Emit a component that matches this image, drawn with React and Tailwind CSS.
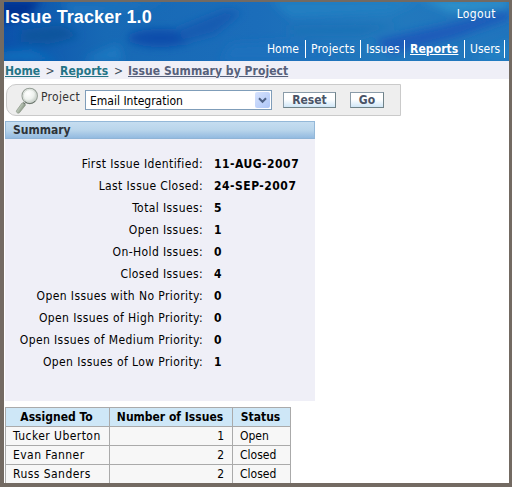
const summary = [
  ["First Issue Identified:", "11-AUG-2007"],
  ["Last Issue Closed:", "24-SEP-2007"],
  ["Total Issues:", "5"],
  ["Open Issues:", "1"],
  ["On-Hold Issues:", "0"],
  ["Closed Issues:", "4"],
  ["Open Issues with No Priority:", "0"],
  ["Open Issues of High Priority:", "0"],
  ["Open Issues of Medium Priority:", "0"],
  ["Open Issues of Low Priority:", "1"],
];

const rows = [
  ["Tucker Uberton", 1, "Open"],
  ["Evan Fanner", 2, "Closed"],
  ["Russ Sanders", 2, "Closed"],
];

function Water() {
  return (
    <svg className="absolute inset-0" width="505" height="59" viewBox="4 2 505 59" preserveAspectRatio="none" aria-hidden="true">
      <defs>
        <linearGradient id="sea" x1="0" x2="1" y1="0" y2="0">
          <stop offset="0" stopColor="#0b52ab" />
          <stop offset="0.2" stopColor="#1769b5" />
          <stop offset="0.5" stopColor="#1b6dba" />
          <stop offset="0.75" stopColor="#2279bd" />
          <stop offset="1" stopColor="#2074bd" />
        </linearGradient>
        <filter id="soft" x="-30%" y="-60%" width="160%" height="220%">
          <feGaussianBlur stdDeviation="4" />
        </filter>
      </defs>
      <rect x="4" y="2" width="505" height="59" fill="url(#sea)" />
      <g filter="url(#soft)">
        <path d="M0 0H42L28 16L0 24Z" fill="#043391" />
        <path d="M22 30L60 25L80 36L50 44L20 42Z" fill="#0b559d" />
        <path d="M0 61V52L30 50L60 61Z" fill="#1070bd" />
        <path d="M90 56L118 44L124 61H84Z" fill="#1d78c1" />
        <path d="M60 2H170L120 12L75 18Z" fill="#1a72bd" />
        <ellipse cx="160" cy="38" rx="32" ry="9" fill="#0e4dab" />
        <path d="M175 30L225 10L242 12L215 34L185 42Z" fill="#155bb1" />
        <path d="M232 44L300 40L340 61H220Z" fill="#1e71bd" />
        <path d="M290 26L400 24L360 36L290 36Z" fill="#1f72b7" />
        <path d="M375 40L440 26L509 9V19L455 38L390 54Z" fill="#1b5bba" />
        <path d="M420 0H509V8L450 12Z" fill="#2f92cb" />
        <path d="M270 0H420L390 14L290 18Z" fill="#237fc2" />
        <path d="M470 61L509 40V61Z" fill="#2381c5" />
      </g>
    </svg>
  );
}

function Magnifier() {
  return (
    <svg className="mt-[2px] ml-2 shrink-0" width="25" height="28" viewBox="0 0 25 28" aria-hidden="true">
      <defs>
        <radialGradient id="glass" cx="0.4" cy="0.35" r="0.68">
          <stop offset="0" stopColor="#ffffff" />
          <stop offset="0.55" stopColor="#eef2ee" />
          <stop offset="1" stopColor="#b9c2bb" />
        </radialGradient>
        <linearGradient id="handle" x1="0" x2="1" y1="0" y2="0.7">
          <stop offset="0" stopColor="#cfd8cc" />
          <stop offset="0.5" stopColor="#b2beaf" />
          <stop offset="1" stopColor="#66735f" />
        </linearGradient>
      </defs>
      <path d="M7.2 15.8L10.4 18.2L4.6 25.6C3.3 27 0.6 25.4 1.6 23.5Z" fill="url(#handle)" stroke="#8a9585" strokeWidth="0.7" />
      <path d="M8.2 15.5L10.6 17.4" stroke="#6c776a" strokeWidth="1.2" />
      <circle cx="14.7" cy="8.9" r="7.7" fill="url(#glass)" stroke="#969f97" strokeWidth="1.1" />
      <path d="M20 14.3A7.5 7.5 0 0 1 10 14.8" fill="none" stroke="#68736a" strokeWidth="1" />
      <circle cx="14.7" cy="8.9" r="6.4" fill="none" stroke="#d2d8d2" strokeWidth="0.8" />
    </svg>
  );
}

const button =
  "h-4 border border-[#8a9ba8] border-r-[#6f8288] border-b-[#6f8288] bg-linear-to-b from-white from-45% to-[#cfe6f7] text-center font-bold leading-[15px] text-[#4a5468]";

export default function App() {
  return (
    <div className="h-[487px] w-[512px] overflow-hidden border-t-2 border-r-3 border-b-4 border-l-4 border-[#736a62] bg-white font-['DejaVu_Sans_Condensed','DejaVu_Sans',sans-serif] text-[12px] leading-[14px] text-black [font-stretch:condensed]">
      <header className="relative h-[59px] overflow-hidden text-white">
        <Water />
        <div className="relative flex h-full flex-col justify-between">
          <div className="flex justify-between">
            <h1 className="pt-[5px] pl-px font-['Liberation_Sans',sans-serif] text-[18px] leading-[20px] font-bold tracking-[0.1px]">Issue Tracker 1.0</h1>
            <a className="mt-[5px] mr-[13px] tracking-[0.4px]">Logout</a>
          </div>
          <nav className="mb-[3px] mr-1 flex h-[18px] justify-end leading-[19px] whitespace-nowrap">
            <a className="w-[39px] border-r border-white">Home</a>
            <a className="w-[55px] border-r border-white pl-[5px] tracking-[0.2px]">Projects</a>
            <a className="w-11 border-r border-white pl-[5px]">Issues</a>
            <a className="w-[60px] border-r border-white pl-[5px] font-bold tracking-[0.1px] underline">Reports</a>
            <a className="w-10 border-r border-white pl-[5px]">Users</a>
          </nav>
        </div>
      </header>
      <div className="flex h-[18px] items-center bg-[#efeff7] pt-px pl-px text-[#3f4f5c]">
        <a className="w-[35px] font-bold text-[#247486] underline">Home</a>
        <span className="w-5 text-center">&gt;</span>
        <a className="w-[49px] font-bold tracking-[0.1px] text-[#247486] underline">Reports</a>
        <span className="w-[19px] text-center">&gt;</span>
        <a className="font-bold tracking-[0.06px] text-[#56607a] underline">Issue Summary by Project</a>
      </div>
      <div className="mt-[5px] ml-[2px] flex h-8 w-[395px] rounded-l-[10px] border border-[#cacaca] bg-[#eeeeee]">
        <Magnifier />
        <label className="mt-[5px] ml-px w-11 tracking-[0.3px] text-[#333]">Project</label>
        <div className="mt-[5px] flex h-5 w-[187px] justify-between border border-[#7f9db9] bg-white p-px">
          <span className="pt-[2px] pl-[3px]">Email Integration</span>
          <span className="flex h-4 w-[15px] items-center justify-center rounded-[2px] bg-linear-to-br from-[#d6e2fd] to-[#adc6f7]">
            <svg width="9" height="7" viewBox="0 0 9 7" aria-hidden="true">
              <path d="M1 1.3L4.5 4.8L8 1.3" fill="none" stroke="#4d6185" strokeWidth="2" />
            </svg>
          </span>
        </div>
        <button className={`${button} mt-[7px] ml-[11px] w-[53px]`}>Reset</button>
        <button className={`${button} mt-[7px] ml-[14px] w-[34px]`}>Go</button>
      </div>
      <section className="mt-[5px] ml-px h-[280px] w-[310px] bg-[#efeff7]">
        <h2 className="h-[18px] border border-t-[#94b8d8] border-r-[#94b8d8] border-b-[#8fb4d7] border-l-[#94b8d8] bg-linear-to-b from-[#c5ddf0] via-[#b9d5eb] via-50% to-[#93bae0] pl-[7px] leading-[17px] font-bold text-[#2d3338]">Summary</h2>
        <dl className="pt-[14px]">
          {summary.map(([label, value]) => (
            <div key={label} className="flex h-[22px] items-center">
              <dt className="w-[198px] text-right tracking-[0.4px]">{label}</dt>
              <dd className="pl-[11px] font-bold tracking-[0.5px]">{value}</dd>
            </div>
          ))}
        </dl>
      </section>
      <table className="mt-[6px] ml-px w-[286px] table-fixed border-collapse bg-[#f7f7f7]">
        <colgroup>
          <col className="w-[104px]" />
          <col className="w-[123px]" />
          <col className="w-[58px]" />
        </colgroup>
        <thead>
          <tr className="h-[19px] bg-[#cee7f7]">
            {["Assigned To", "Number of Issues", "Status"].map((name) => (
              <th key={name} className="border border-[#aaaaaa] py-0 pr-[2px] pl-0 whitespace-nowrap">{name}</th>
            ))}
          </tr>
        </thead>
        <tbody>
          {rows.map(([name, count, status]) => (
            <tr key={name} className="h-[19px]">
              <td className="border border-[#aaaaaa] py-0 pl-[7px] tracking-[0.45px] whitespace-nowrap">{name}</td>
              <td className="border border-[#aaaaaa] py-0 pr-2 text-right">{count}</td>
              <td className="border border-[#aaaaaa] py-0 pl-[7px]">{status}</td>
            </tr>
          ))}
        </tbody>
      </table>
    </div>
  );
}
